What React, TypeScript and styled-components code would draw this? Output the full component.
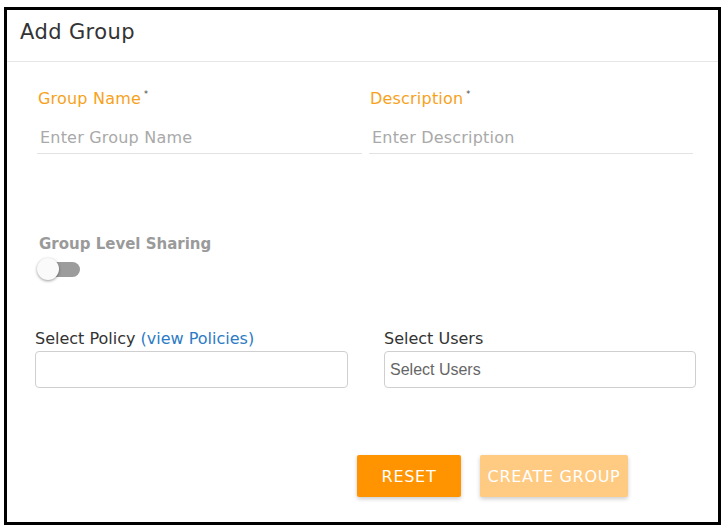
import React from "react";
import styled, { createGlobalStyle } from "styled-components";

const GlobalStyle = createGlobalStyle`
  body {
    margin: 0;
    background: #ffffff;
    font-family: "DejaVu Sans", "Open Sans", sans-serif;
  }
`;

const Panel = styled.div`
  margin: 7px 0 0 4px;
  width: 711px;
  height: 512px;
  border: 3px solid #000;
  background: #fff;
  display: flex;
  flex-direction: column;
`;

const Header = styled.div`
  box-sizing: border-box;
  height: 52px;
  border-bottom: 1px solid #e6e6e6;
  display: flex;
  align-items: center;
  padding: 0 0 8px 13px;
`;

const Title = styled.h2`
  margin: 0;
  font-size: 21px;
  font-weight: 400;
  color: #333;
  letter-spacing: 0.4px;
`;

const Body = styled.div`
  padding: 27px 25px 0 30px;
`;

const FieldRow = styled.div`
  display: grid;
  grid-template-columns: 325px 324px;
  column-gap: 7px;
`;

const Field = styled.div`
  display: flex;
  flex-direction: column;
`;

const Label = styled.label`
  font-size: 16px;
  line-height: 20px;
  color: #f7a21b;
  padding-left: 1px;
  letter-spacing: 0.2px;

  sup {
    color: #444;
    font-size: 8px;
    vertical-align: top;
    margin-left: 3px;
    position: relative;
    top: -4px;
  }
`;

const LineInput = styled.input`
  margin-top: 12px;
  height: 32px;
  border: none;
  border-bottom: 1px solid #e2e2e2;
  padding: 0 0 0 3px;
  font-family: inherit;
  font-size: 16px;
  letter-spacing: 0.2px;
  outline: none;

  &::placeholder {
    color: #a9a9a9;
  }
`;

const SharingBlock = styled.div`
  margin-top: 80px;
  padding-left: 2px;
`;

const SharingLabel = styled.div`
  font-size: 15px;
  line-height: 20px;
  font-weight: 700;
  color: #9a9a9a;
`;

const Toggle = styled.div`
  position: relative;
  margin-top: 3px;
  width: 44px;
  height: 24px;
`;

const Track = styled.div`
  position: absolute;
  left: 2px;
  top: 5px;
  width: 39px;
  height: 15px;
  border-radius: 8px;
  background: #9c9c9c;
`;

const Thumb = styled.div`
  position: absolute;
  left: -2px;
  top: 1px;
  width: 22px;
  height: 22px;
  border-radius: 50%;
  background: #fafafa;
  box-shadow: 0 1px 3px rgba(0, 0, 0, 0.4);
`;

const SelectRow = styled.div`
  margin-top: 48px;
  margin-left: -2px;
  display: grid;
  grid-template-columns: 313px 312px;
  column-gap: 36px;
`;

const SelectLabel = styled.div`
  font-size: 16px;
  line-height: 20px;
  color: #333;
`;

const Link = styled.a`
  color: #2d7bc4;
  text-decoration: none;
`;

const BoxInput = styled.input`
  margin-top: 2px;
  box-sizing: border-box;
  height: 37px;
  border: 1px solid #cfcfcf;
  border-radius: 4px;
  padding: 0 5px;
  font-family: "Liberation Sans", Arial, sans-serif;
  font-size: 16px;
  outline: none;

  &::placeholder {
    color: #666;
  }
`;

const Actions = styled.div`
  display: flex;
  justify-content: flex-end;
  gap: 19px;
  margin-top: 67px;
  padding-right: 65px;
`;

const ActionButton = styled.button<{ $disabled?: boolean; $width: number }>`
  width: ${(p) => p.$width}px;
  height: 42px;
  padding: 0;
  border: none;
  border-radius: 2px;
  background: ${(p) => (p.$disabled ? "#ffca82" : "#ff9400")};
  color: #fff;
  font-family: inherit;
  font-size: 16px;
  letter-spacing: 0.7px;
  text-transform: uppercase;
  box-shadow: 0 2px 4px rgba(0, 0, 0, 0.2);
  cursor: ${(p) => (p.$disabled ? "default" : "pointer")};
`;

const App = (): JSX.Element => {
  return (
    <>
      <GlobalStyle />
      <Panel>
        <Header>
          <Title>Add Group</Title>
        </Header>
        <Body>
          <FieldRow>
            <Field>
              <Label>
                Group Name<sup>*</sup>
              </Label>
              <LineInput placeholder="Enter Group Name" />
            </Field>
            <Field>
              <Label>
                Description<sup>*</sup>
              </Label>
              <LineInput placeholder="Enter Description" />
            </Field>
          </FieldRow>
          <SharingBlock>
            <SharingLabel>Group Level Sharing</SharingLabel>
            <Toggle>
              <Track />
              <Thumb />
            </Toggle>
          </SharingBlock>
          <SelectRow>
            <Field>
              <SelectLabel>
                Select Policy <Link href="#">(view Policies)</Link>
              </SelectLabel>
              <BoxInput />
            </Field>
            <Field>
              <SelectLabel>Select Users</SelectLabel>
              <BoxInput placeholder="Select Users" />
            </Field>
          </SelectRow>
          <Actions>
            <ActionButton $width={104}>Reset</ActionButton>
            <ActionButton $width={148} $disabled>
              Create Group
            </ActionButton>
          </Actions>
        </Body>
      </Panel>
    </>
  );
};

export default App;
